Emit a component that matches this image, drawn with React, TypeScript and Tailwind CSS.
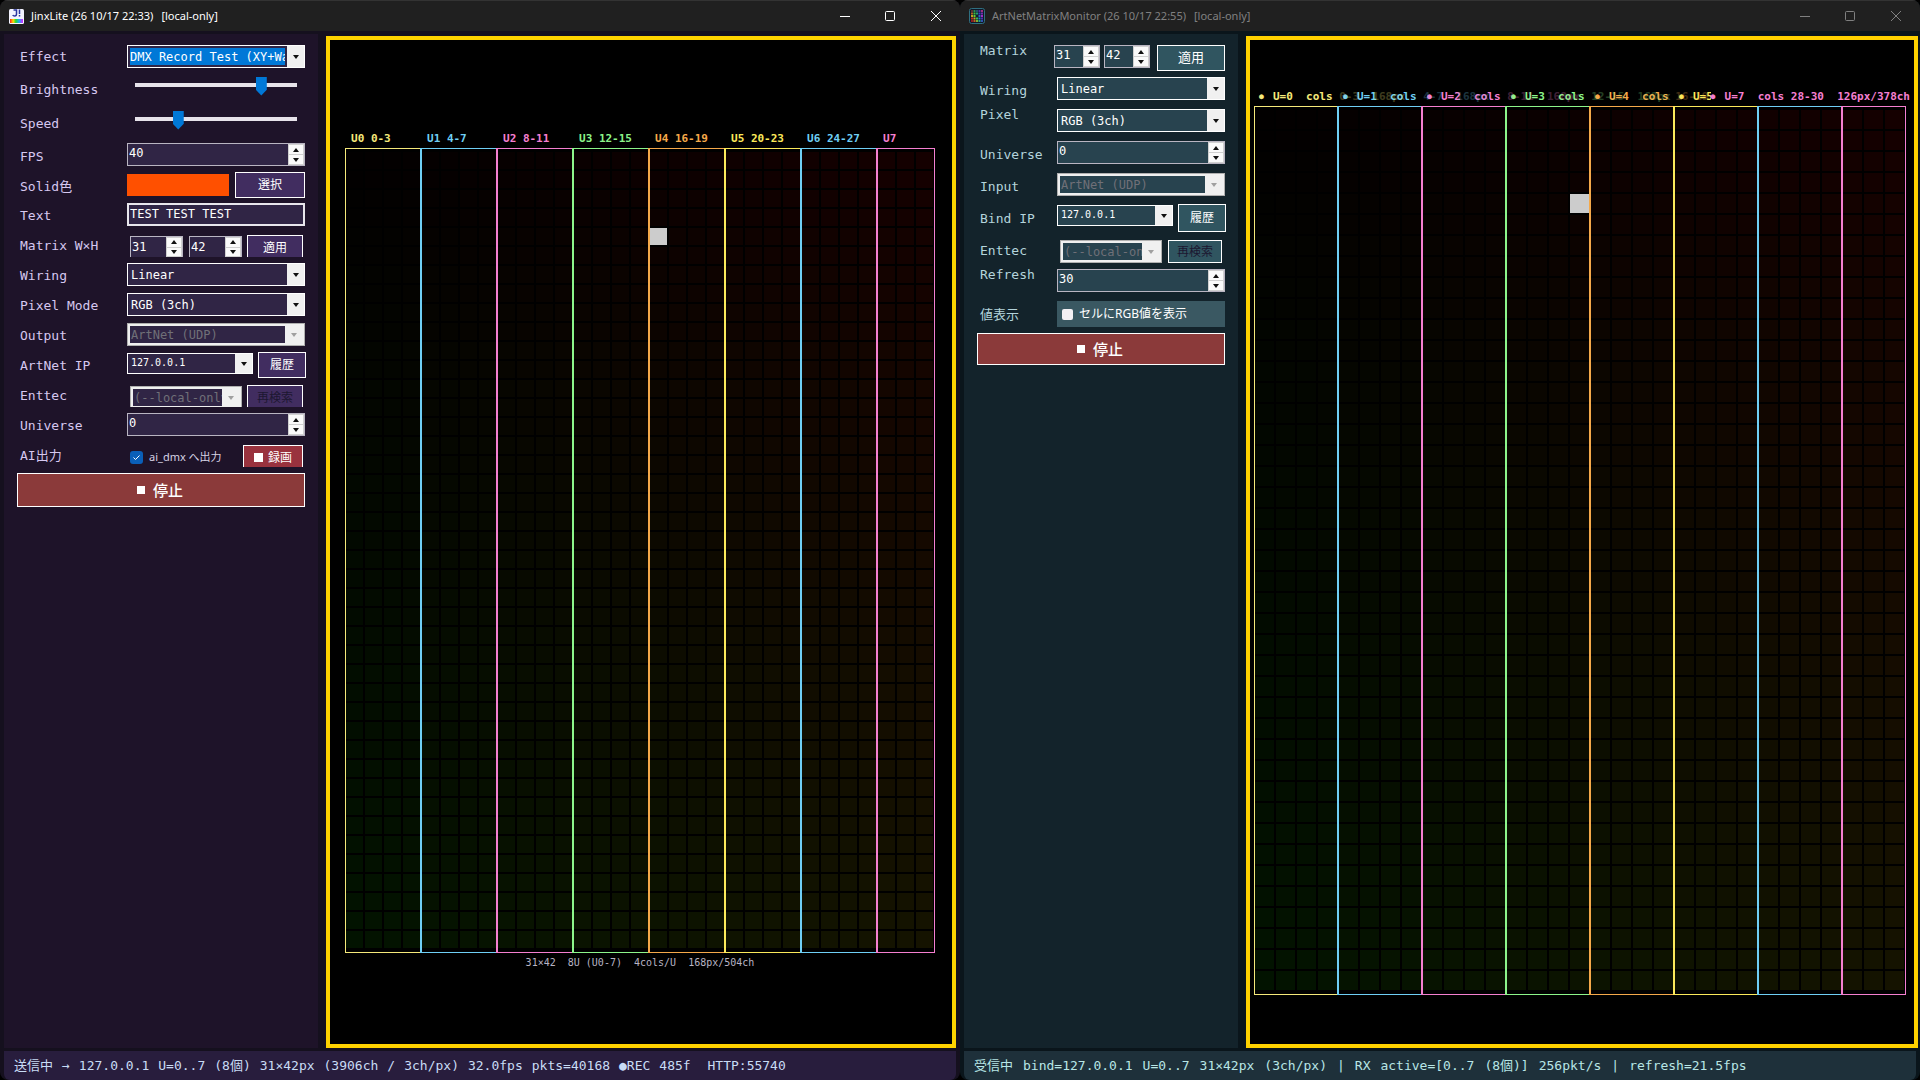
import React, { ReactNode, useId } from "react";

const UNIVERSE_COLORS = ["#f5e97a", "#6fcff5", "#f57fd0", "#8cf58a", "#f5a94a", "#fbe95a", "#6fcff5", "#f57fd0"];
const TEXT_COLORS = [
  "text-[#f5e97a]",
  "text-[#6fcff5]",
  "text-[#f57fd0]",
  "text-[#8cf58a]",
  "text-[#f5a94a]",
  "text-[#fbe95a]",
  "text-[#6fcff5]",
  "text-[#f57fd0]",
];
const COLS = 31;
const ROWS = 42;
const MONO = "font-['DejaVu_Sans_Mono','Noto_Sans_CJK_JP',monospace]";
const SANS = "font-['Noto_Sans','Noto_Sans_CJK_JP',sans-serif]";

type Theme = "jinx" | "monitor";
const FIELD: Record<Theme, string> = { jinx: "bg-[#302545]", monitor: "bg-[#28434f]" };
const BUTTON: Record<Theme, string> = { jinx: "bg-[#412d60]", monitor: "bg-[#305560]" };
const LABEL: Record<Theme, string> = { jinx: "text-[#d6c8f0]", monitor: "text-[#b4d4dc]" };

function Triangle({ up = false, dim = false }: { up?: boolean; dim?: boolean }) {
  return (
    <svg width="6" height="4" viewBox="0 0 6 4" aria-hidden="true">
      <path d={up ? "M0 4L3 0L6 4Z" : "M0 0L6 0L3 4Z"} fill={dim ? "#a0a0a0" : "#101010"} />
    </svg>
  );
}

function Field({ id, label, theme, row, top, pad = "pt-[3px]", children }: {
  id?: string; label: string; theme: Theme; row: string; top?: boolean; pad?: string; children: ReactNode;
}) {
  return (
    <div className={`flex ${row}`}>
      <label
        htmlFor={id}
        className={`shrink-0 pl-4 text-[13px] leading-[18px] ${theme === "jinx" ? "w-[123px]" : "w-[93px]"} ${top ? "self-start" : "self-center pt-0.5"} ${LABEL[theme]}`}
      >
        {label}
      </label>
      <div className={`flex min-w-0 flex-1 items-start ${pad}`}>{children}</div>
    </div>
  );
}

function Combo({ id, value, theme, disabled, selected, small, cut, width = "w-full" }: {
  id?: string; value: string; theme: Theme; disabled?: boolean; selected?: boolean; small?: boolean; cut?: boolean; width?: string;
}) {
  return (
    <div
      className={`relative flex shrink-0 border ${width} ${small || cut ? "h-[21px]" : "h-[23px]"} ${disabled ? `border-[#b0b0b0] bg-[#f0f0f0] p-[2px] ${cut ? "border-b-0 pb-px" : ""}` : `border-white ${FIELD[theme]}`} ${selected ? "py-[2px] pl-[2px]" : ""}`}
    >
      <select
        id={id}
        disabled={disabled}
        className={`min-w-0 flex-1 appearance-none overflow-hidden whitespace-nowrap opacity-100 outline-none ${small ? "pb-[3px] pl-0.5 text-[10px]" : "text-[12px]"} ${selected ? "mr-0.5 bg-[#0078d7] text-white" : disabled ? `pl-px text-[#707078] ${FIELD[theme]}` : `pl-[3px] text-white ${FIELD[theme]}`}`}
      >
        <option>{value}</option>
      </select>
      <span
        className={`pointer-events-none flex w-[17px] shrink-0 items-center justify-center bg-[#f0f0f0] ${selected ? "-my-[2px]" : ""}`}
      >
        <Triangle dim={disabled} />
      </span>
    </div>
  );
}

function Spinner({ id, value, theme, width = "w-full", label, cut }: {
  id?: string; value: string; theme: Theme; width?: string; label: string; cut?: boolean;
}) {
  return (
    <div className={`flex shrink-0 border border-[#b9b5c2] ${width} ${cut ? "h-[21px] border-b-0" : "h-[23px]"} ${FIELD[theme]}`}>
      <input
        id={id}
        aria-label={label}
        defaultValue={value}
        inputMode="numeric"
        className={`w-0 min-w-0 flex-1 bg-transparent pl-px text-[12px] text-white outline-none ${cut ? "pb-px" : "pb-[3px]"}`}
      />
      <span className="flex w-4 shrink-0 flex-col gap-px bg-[#d0d0d0] p-px">
        <button type="button" aria-label={`${label} up`} className="flex flex-1 items-center justify-center bg-[#fafafa]">
          <Triangle up />
        </button>
        <button type="button" aria-label={`${label} down`} className="flex flex-1 items-center justify-center bg-[#fafafa]">
          <Triangle />
        </button>
      </span>
    </div>
  );
}

function Button({ children, theme, className, disabled }: { children: ReactNode; theme: Theme; className: string; disabled?: boolean }) {
  return (
    <button
      type="button"
      disabled={disabled}
      className={`flex shrink-0 items-center justify-center whitespace-nowrap border border-white ${BUTTON[theme]} ${disabled ? "text-[#1c1730]" : "text-white"} ${className}`}
    >
      {children}
    </button>
  );
}

function Slider({ id, value }: { id: string; value: number }) {
  return (
    <input
      id={id}
      type="range"
      defaultValue={value}
      className="ml-2 mr-2 h-[19px] w-full min-w-0 appearance-none bg-transparent [&::-webkit-slider-runnable-track]:h-1 [&::-webkit-slider-runnable-track]:bg-[#e7e3ea] [&::-webkit-slider-thumb]:-mt-[6px] [&::-webkit-slider-thumb]:h-[19px] [&::-webkit-slider-thumb]:w-[11px] [&::-webkit-slider-thumb]:appearance-none [&::-webkit-slider-thumb]:bg-[#0078d7] [&::-webkit-slider-thumb]:[clip-path:polygon(0_0,100%_0,100%_70%,50%_100%,0_70%)]"
    />
  );
}

function StopButton({ className }: { className: string }) {
  return (
    <button
      type="button"
      className={`flex items-center justify-center gap-2 border border-white bg-[#8b3a3a] pr-0.5 text-[15px] font-medium text-white ${SANS} ${className}`}
    >
      <span className="size-2 bg-white" />
      停止
    </button>
  );
}

function Matrix({ cell, dotCol }: { cell: number; dotCol: number }) {
  const w = COLS * cell + 1;
  const h = ROWS * cell + 7;
  const cells: ReactNode[] = [];
  for (let r = 0; r < ROWS; r++) {
    for (let c = 0; c < COLS; c++) {
      const lit = r === 4 && c === dotCol;
      const red = Math.round(2 + (c / (COLS - 1)) * 19);
      const green = Math.round((r / (ROWS - 1)) * 19);
      cells.push(
        <rect
          key={`${r}-${c}`}
          x={c * cell + 1}
          y={r * cell + 4}
          width={cell - 2}
          height={cell - 2}
          fill={lit ? "#cccccc" : `rgb(${red},${green},0)`}
        />,
      );
    }
  }
  return (
    <svg width={w} height={h} viewBox={`0 0 ${w} ${h}`} shapeRendering="crispEdges" className="shrink-0" aria-label="LED matrix">
      {cells}
      {UNIVERSE_COLORS.map((color, i) => {
        const x = i * 4 * cell;
        const end = Math.min((i + 1) * 4, COLS) * cell;
        return (
          <g key={i} fill={color}>
            <rect x={x} y={0} width={end - x} height={1} />
            <rect x={x} y={h - 1} width={end - x} height={1} />
            <rect x={i ? x - 1 : x} y={0} width={i ? 2 : 1} height={h} />
          </g>
        );
      })}
      <rect x={w - 1} y={0} width={1} height={h} fill="#f57fd0" />
    </svg>
  );
}

function TitleBar({ icon, title, active }: { icon: ReactNode; title: string; active?: boolean }) {
  return (
    <header
      className={`flex h-[31px] shrink-0 items-center border-t border-[#333333] bg-[#202020] pl-[9px] ${SANS} ${active ? "text-white" : "text-[#808080]"}`}
    >
      {icon}
      <h1 className="ml-[7px] flex gap-2 whitespace-pre text-[11px]">
        <span>{title}</span>
        <span>[local-only]</span>
      </h1>
      <div className="ml-auto flex items-center pr-px">
        <button type="button" aria-label="Minimize" className="flex h-7 w-[45px] items-center justify-center">
          <svg width="10" height="10" fill="none" stroke="currentColor"><path d="M0 5.5H10" /></svg>
        </button>
        <button type="button" aria-label="Maximize" className="flex h-7 w-[45px] items-center justify-center">
          <svg width="10" height="10" fill="none" stroke="currentColor"><rect x="0.5" y="0.5" width="9" height="9" rx="1" /></svg>
        </button>
        <button type="button" aria-label="Close" className="flex h-7 w-[47px] items-center justify-center">
          <svg width="10" height="10" fill="none" stroke="currentColor"><path d="M0 0L10 10M10 0L0 10" /></svg>
        </button>
      </div>
    </header>
  );
}

function StatusBar({ parts, className }: { parts: string[]; className: string }) {
  return (
    <footer className={`mx-1 mt-[3px] flex h-[29px] shrink-0 items-center whitespace-pre rounded-b-md pl-[10px] text-[13px] ${className}`}>
      {parts.map((p, i) => (
        <span key={i}>{p}</span>
      ))}
    </footer>
  );
}

function JinxIcon() {
  return (
    <svg width="15" height="15" viewBox="0 0 15 15" aria-hidden="true">
      <defs>
        <linearGradient id="rainbow">
          <stop offset="0" stopColor="#f22" />
          <stop offset="0.25" stopColor="#fd0" />
          <stop offset="0.45" stopColor="#2d3" />
          <stop offset="0.7" stopColor="#2af" />
          <stop offset="1" stopColor="#d2f" />
        </linearGradient>
      </defs>
      <rect width="15" height="15" rx="1.5" fill="#f4f4ff" />
      <path d="M4.5 1H7.500V5Q7.500 7 5.700 7Q4.200 7 3.800 6M10.500 0.500V5M10.500 6V7.500" fill="none" stroke="#2a35a0" strokeWidth="1.500" />
      <rect x="1" y="10" width="13" height="4" fill="url(#rainbow)" />
    </svg>
  );
}

function MonitorIcon() {
  const rows = [
    ["#5a3030", "#2c8c50", "#24506a", "#5030a0", "#a03080"],
    ["#b05a20", "#40c040", "#20a070", "#3040c0", "#7030b0"],
    ["#c0a020", "#60d030", "#102030", "#3060d0", "#a030c0"],
    ["#b03020", "#d0a020", "#30c050", "#2080c0", "#5030b0"],
    ["#901820", "#c06020", "#80b030", "#20a090", "#3050b0"],
  ];
  return (
    <svg width="16" height="16" viewBox="0 0 16 16" aria-hidden="true">
      <rect x="0.5" y="0.5" width="15" height="15" rx="2" fill="#101828" stroke="#2f6f80" />
      {rows.map((row, r) =>
        row.map((fill, c) => <rect key={`${r}${c}`} x={2 + c * 2.5} y={2 + r * 2.5} width="2" height="2" fill={fill} />),
      )}
    </svg>
  );
}

function JinxWindow() {
  const id = useId();
  const t: Theme = "jinx";
  const ranges = ["0-3", "4-7", "8-11", "12-15", "16-19", "20-23", "24-27", ""];
  return (
    <section className="flex min-w-0 flex-col overflow-hidden rounded-lg bg-[#15101e]">
      <TitleBar active icon={<JinxIcon />} title="JinxLite (26 10/17 22:33)" />
      <div className="flex min-h-0 flex-1 pl-1 pr-1 pt-[3px]">
        <form className="w-[314px] shrink-0 bg-[#1e1329] pr-[13px] pt-[6px]">
          <Field id={`${id}e`} label="Effect" theme={t} row="h-8" pad="pt-[5px]">
            <Combo id={`${id}e`} theme={t} selected value="DMX Record Test (XY+Wave)" />
          </Field>
          <Field id={`${id}b`} label="Brightness" theme={t} row="h-[34px]" pad="pt-[3px]">
            <Slider id={`${id}b`} value={80} />
          </Field>
          <Field id={`${id}s`} label="Speed" theme={t} row="h-[34px]" pad="pt-[3px]">
            <Slider id={`${id}s`} value={25} />
          </Field>
          <Field id={`${id}f`} label="FPS" theme={t} row="h-[31px]">
            <Spinner id={`${id}f`} label="FPS" theme={t} value="40" />
          </Field>
          <Field label="Solid色" theme={t} row="h-[29px]" pad="pt-px">
            <span className="mt-[2px] h-[22px] w-[102px] bg-[#ff5000]" />
            <Button theme={t} className={`ml-[6px] h-[26px] w-[70px] text-[12px] ${SANS}`}>選択</Button>
          </Field>
          <Field id={`${id}t`} label="Text" theme={t} row="h-[30px]">
            <input
              id={`${id}t`}
              defaultValue="TEST TEST TEST"
              className="h-[23px] w-full min-w-0 border-2 border-[#e8e6ec] bg-[#302545] pb-px pl-px text-[12px] text-white outline-none"
            />
          </Field>
          <Field label="Matrix W×H" theme={t} row="h-[30px]" pad="pt-[6px]">
            <div className="ml-[3px] flex gap-[6px]">
              <Spinner cut label="Matrix width" theme={t} value="31" width="w-[53px]" />
              <Spinner cut label="Matrix height" theme={t} value="42" width="w-[53px]" />
            </div>
            <Button theme={t} className={`-mt-px ml-[5px] h-[22px] w-[56px] border-b-0 pt-0.5 text-[12px] ${SANS}`}>適用</Button>
          </Field>
          <Field id={`${id}w`} label="Wiring" theme={t} row="h-[30px]">
            <Combo id={`${id}w`} theme={t} value="Linear" />
          </Field>
          <Field id={`${id}p`} label="Pixel Mode" theme={t} row="h-[30px]">
            <Combo id={`${id}p`} theme={t} value="RGB (3ch)" />
          </Field>
          <Field id={`${id}o`} label="Output" theme={t} row="h-[30px]">
            <Combo id={`${id}o`} theme={t} disabled value="ArtNet (UDP)" />
          </Field>
          <Field id={`${id}a`} label="ArtNet IP" theme={t} row="h-[30px]">
            <Combo id={`${id}a`} theme={t} small width="w-[126px]" value="127.0.0.1" />
            <Button theme={t} className={`-mt-px ml-[5px] h-[26px] w-[48px] text-[12px] ${SANS}`}>履歴</Button>
          </Field>
          <Field id={`${id}n`} label="Enttec" theme={t} row="h-[30px]" pad="pl-[3px] pt-[6px]">
            <Combo id={`${id}n`} theme={t} disabled cut width="w-[112px]" value="(--local-only)" />
            <Button theme={t} disabled className={`-mt-px ml-[5px] h-[22px] w-[56px] border-b-0 pt-0.5 text-[12px] ${SANS}`}>再検索</Button>
          </Field>
          <Field id={`${id}u`} label="Universe" theme={t} row="h-[30px]">
            <Spinner id={`${id}u`} label="Universe" theme={t} value="0" />
          </Field>
          <Field label="AI出力" theme={t} row="h-[30px]" pad="pl-[3px] pt-[5px]">
            <label className={`flex h-6 items-center gap-[6px] whitespace-nowrap text-[11px] text-[#d6d2e4] ${SANS}`}>
              <span className="relative flex">
                <input type="checkbox" defaultChecked className="size-[13px] appearance-none rounded-[3px] bg-[#0a5fb8]" />
                <svg className="pointer-events-none absolute inset-0" width="13" height="13" fill="none" stroke="#fff" aria-hidden="true">
                  <path d="M3.500 6.500L5.500 8.500L9.500 4.500" />
                </svg>
              </span>
              ai_dmx へ出力
            </label>
            <button type="button" className={`ml-auto mr-[2px] flex h-[22px] w-[60px] shrink-0 items-center justify-center gap-[5px] border border-b-0 border-white bg-[#99323e] pt-0.5 text-[12px] text-white ${SANS}`}>
              <span className="size-[9px] bg-white" />
              録画
            </button>
          </Field>
          <StopButton className="ml-[13px] mt-[3px] h-[34px] w-[288px]" />
        </form>
        <main className="ml-2 mt-[2px] flex min-w-0 flex-1 flex-col items-center border-4 border-[#ffd200] bg-black pr-0.5 pt-[90px]">
          <div className="flex w-[590px] pl-[6px] text-[11px] font-bold leading-[18px]">
            {ranges.map((r, i) => (
              <span key={i} className={`w-[76px] shrink-0 last:w-auto ${TEXT_COLORS[i]}`}>
                U{i} {r}
              </span>
            ))}
          </div>
          <Matrix cell={19} dotCol={16} />
          <p className="whitespace-pre pt-px text-[10px] leading-[18px] text-[#b8b4c4]">31×42  8U (U0-7)  4cols/U  168px/504ch</p>
        </main>
      </div>
      <StatusBar
        className="gap-[9px] bg-[#281d3d] text-[#c8dcf5]"
        parts={["送信中", "→", "127.0.0.1", "U=0..7", "(8個)", "31×42px", "(3906ch", "/", "3ch/px)", "32.0fps", "pkts=40168", "●REC", "485f ", "HTTP:55740"]}
      />
    </section>
  );
}

function MonitorWindow() {
  const id = useId();
  const t: Theme = "monitor";
  return (
    <section className="flex min-w-0 flex-col overflow-hidden rounded-lg bg-[#0a151b]">
      <TitleBar icon={<MonitorIcon />} title="ArtNetMatrixMonitor (26 10/17 22:55)" />
      <div className="flex min-h-0 flex-1 pl-1 pr-[2px] pt-[3px]">
        <form className="w-[274px] shrink-0 bg-[#13232b] pr-[13px] pt-2">
          <Field label="Matrix" theme={t} row="h-8" top>
            <div className="-ml-[3px] flex gap-1">
              <Spinner label="Matrix width" theme={t} value="31" width="w-[46px]" />
              <Spinner label="Matrix height" theme={t} value="42" width="w-[46px]" />
            </div>
            <Button theme={t} className={`ml-[7px] h-[26px] w-[68px] text-[13px] ${SANS}`}>適用</Button>
          </Field>
          <Field id={`${id}w`} label="Wiring" theme={t} row="h-8">
            <Combo id={`${id}w`} theme={t} value="Linear" />
          </Field>
          <Field id={`${id}p`} label="Pixel" theme={t} row="h-8" top>
            <Combo id={`${id}p`} theme={t} value="RGB (3ch)" />
          </Field>
          <Field id={`${id}u`} label="Universe" theme={t} row="h-8">
            <Spinner id={`${id}u`} label="Universe" theme={t} value="0" />
          </Field>
          <Field id={`${id}i`} label="Input" theme={t} row="h-8">
            <Combo id={`${id}i`} theme={t} disabled value="ArtNet (UDP)" />
          </Field>
          <Field id={`${id}b`} label="Bind IP" theme={t} row="h-8">
            <Combo id={`${id}b`} theme={t} small width="w-[116px]" value="127.0.0.1" />
            <Button theme={t} className={`-mt-px ml-[5px] h-[28px] w-[48px] text-[12px] ${SANS}`}>履歴</Button>
          </Field>
          <Field id={`${id}n`} label="Enttec" theme={t} row="h-8" pad="pl-[3px] pt-[6px]">
            <Combo id={`${id}n`} theme={t} disabled width="w-[102px]" value="(--local-only)" />
            <Button theme={t} disabled className={`ml-[6px] h-[23px] w-[54px] text-[12px] ${SANS}`}>再検索</Button>
          </Field>
          <Field id={`${id}r`} label="Refresh" theme={t} row="h-8" top>
            <Spinner id={`${id}r`} label="Refresh" theme={t} value="30" />
          </Field>
          <Field label="値表示" theme={t} row="h-8">
            <label className={`flex h-[26px] w-full items-center gap-[6px] whitespace-nowrap bg-[#3a5862] pl-[5px] text-[12px] text-white ${SANS}`}>
              <input type="checkbox" className="size-[11px] appearance-none rounded-[2px] bg-[#f4f0f4]" />
              セルにRGB値を表示
            </label>
          </Field>
          <StopButton className="ml-[13px] mt-[3px] h-8 w-[248px]" />
        </form>
        <main className="ml-2 mt-[2px] flex min-w-0 flex-1 flex-col items-center border-4 border-[#ffd200] bg-black pr-1 pt-[48px]">
          <div className="relative flex w-[652px] whitespace-pre pl-[5px] text-[11px] font-bold leading-[18px]">
            {["0-3", "4-7", "8-11", "12-15", "16-19", "20-23"].map((r, i) => (
              <span key={r} className={`flex w-[84px] shrink-0 ${TEXT_COLORS[i]}`}>
                <span className="w-[14px] shrink-0 text-[8px]">●</span>
                U={i}  cols <span className="opacity-25">{r}  168px</span>
              </span>
            ))}
            <span className={`absolute -right-1 top-0 flex bg-black ${TEXT_COLORS[7]}`}>
              <span className="w-[14px] shrink-0 text-[8px]">●</span>
              U=7  cols 28-30  126px/378ch
            </span>
          </div>
          <Matrix cell={21} dotCol={15} />
        </main>
      </div>
      <StatusBar
        className="gap-[10px] bg-[#1e303a] text-[#b8e6e6]"
        parts={["受信中", "bind=127.0.0.1", "U=0..7", "31×42px", "(3ch/px)", "|", "RX", "active=[0..7", "(8個)]", "256pkt/s", "|", "refresh=21.5fps"]}
      />
    </section>
  );
}

export default function App() {
  return (
    <div className={`grid h-screen grid-cols-2 bg-black ${MONO}`}>
      <JinxWindow />
      <MonitorWindow />
    </div>
  );
}
